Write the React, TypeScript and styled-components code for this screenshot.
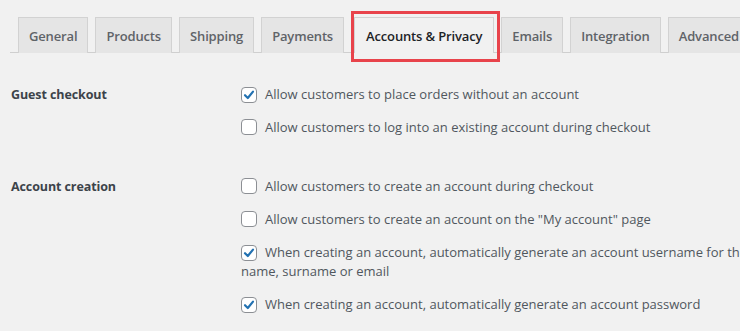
import React from "react";
import styled, { createGlobalStyle } from "styled-components";

const Global = createGlobalStyle`
  html, body { margin: 0; padding: 0; background: #f1f1f1; overflow: hidden; }
  body { font-family: "Open Sans", "Noto Sans", sans-serif; color: #50575e; }
`;

const Page = styled.div`
  width: 1000px;
  padding: 17px 0 0 10px;
`;

const TabBar = styled.nav`
  display: flex;
  gap: 7px;
  padding-left: 8px;
  border-bottom: 1px solid #cfcfcf;
  margin-bottom: 32px;
`;

const Tab = styled.div<{ $active?: boolean }>`
  position: relative;
  box-sizing: border-box;
  height: 36px;
  padding: 0 10px;
  display: flex;
  align-items: center;
  font-size: 13px;
  font-weight: 600;
  letter-spacing: -0.15px;
  white-space: nowrap;
  border: 1px solid #d2d2d2;
  border-bottom: none;
  margin-bottom: -1px;
  background: ${(p) => (p.$active ? "#f1f1f1" : "#e5e5e5")};
  color: ${(p) => (p.$active ? "#1d2327" : "#5f6368")};
  ${(p) => (p.$active ? "margin-left: 3px; padding: 0 11px;" : "")}
`;

const Highlight = styled.span`
  position: absolute;
  left: -4px;
  right: -7px;
  top: -7px;
  bottom: -9px;
  border: 3px solid #e8434b;
  pointer-events: none;
`;

const Section = styled.section`
  display: grid;
  grid-template-columns: 231px 1fr;
  margin-bottom: 40px;
`;

const Heading = styled.div`
  padding-left: 1px;
  font-size: 12.5px;
  line-height: 19px;
  font-weight: 700;
  color: #3c434a;
  letter-spacing: -0.1px;
`;

const Options = styled.div`
  display: flex;
  flex-direction: column;
  gap: 14px;
  width: 670px;
`;

const Option = styled.label`
  display: block;
  font-size: 13px;
  line-height: 19px;
  color: #50575e;
`;

const Box = styled.span`
  display: inline-flex;
  align-items: center;
  justify-content: center;
  box-sizing: border-box;
  width: 16px;
  height: 16px;
  margin-right: 8px;
  vertical-align: -3px;
  border: 1px solid #8c8f94;
  border-radius: 4px;
  background: #fff;
`;

const Check = () => (
  <svg width="14" height="14" viewBox="0 0 14 14">
    <path d="M3 7.2 L5.8 10 L11 3.6" fill="none" stroke="#2271b1" strokeWidth="2.2" strokeLinecap="round" strokeLinejoin="round" />
  </svg>
);

const CheckItem = ({ checked, children }: { checked?: boolean; children: React.ReactNode }) => (
  <Option>
    <Box>{checked && <Check />}</Box>
    {children}
  </Option>
);

const tabs = ["General", "Products", "Shipping", "Payments", "Accounts & Privacy", "Emails", "Integration", "Advanced"];

export default function App() {
  return (
    <>
      <Global />
      <Page>
        <TabBar>
          {tabs.map((t) => (
            <Tab key={t} $active={t === "Accounts & Privacy"}>
              {t}
              {t === "Accounts & Privacy" && <Highlight />}
            </Tab>
          ))}
        </TabBar>
        <Section>
          <Heading>Guest checkout</Heading>
          <Options>
            <CheckItem checked>Allow customers to place orders without an account</CheckItem>
            <CheckItem>Allow customers to log into an existing account during checkout</CheckItem>
          </Options>
        </Section>
        <Section>
          <Heading>Account creation</Heading>
          <Options>
            <CheckItem>Allow customers to create an account during checkout</CheckItem>
            <CheckItem>Allow customers to create an account on the "My account" page</CheckItem>
            <CheckItem checked>
              When creating an account, automatically generate an account username for the customer based on their name, surname or email
            </CheckItem>
            <CheckItem checked>When creating an account, automatically generate an account password</CheckItem>
          </Options>
        </Section>
      </Page>
    </>
  );
}
